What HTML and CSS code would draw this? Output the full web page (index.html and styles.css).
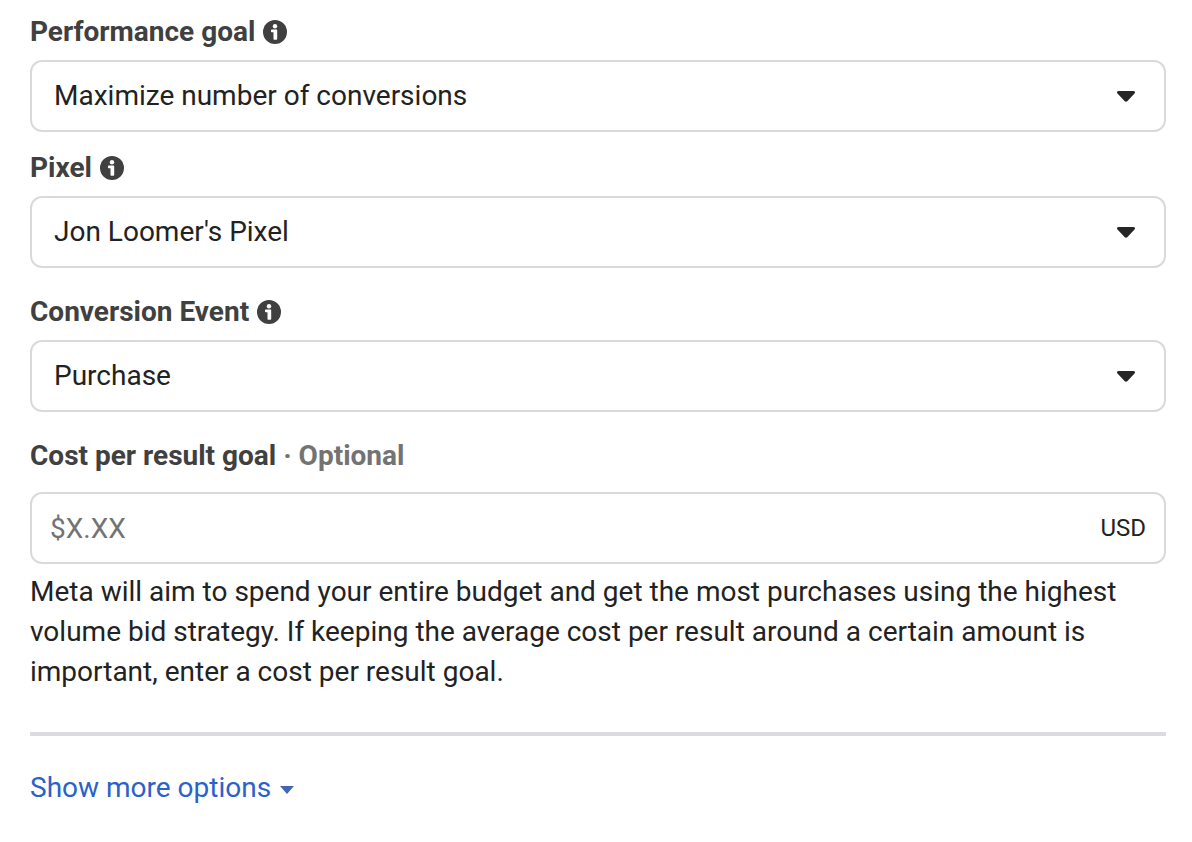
FILE: index.html
```html
<!DOCTYPE html>
<html lang="en">
<head>
<meta charset="utf-8">
<title>Performance goal</title>
<link rel="stylesheet" href="styles.css">
</head>
<body>
<svg class="sprite" aria-hidden="true">
<symbol id="info" viewBox="0 0 24 24"><circle cx="12" cy="12" r="12"/><circle class="cut" cx="12" cy="6.2" r="2.2"/><path class="cut" d="M9 9.500h4.200c.6 0 1 .4 1 1v8.200c0 .6-.4 1-1 1h-1.700c-.6 0-1-.4-1-1v-6.500H9c-.6 0-1-.4-1-1v-.7c0-.6.4-1 1-1z"/></symbol>
<symbol id="caret" viewBox="0 0 20 12"><path d="M2.500 1h15c1.500 0 2 1.600 1 2.600l-7 7.500c-.9.900-2.100.9-3 0l-7-7.500C.5 2.600 1 1 2.500 1z"/></symbol>
<symbol id="more-caret" viewBox="0 0 14 8"><path d="M0 0h14L7 8z"/></symbol>
</svg>
<form class="form">
<div class="field">
<div class="heading"><label for="goal">Performance goal</label><svg class="info"><use href="#info"/></svg></div>
<div class="box">
<select id="goal" class="control"><option>Maximize number of conversions</option></select>
<svg class="caret"><use href="#caret"/></svg>
</div>
</div>
<div class="field">
<div class="heading"><label for="pixel">Pixel</label><svg class="info"><use href="#info"/></svg></div>
<div class="box">
<select id="pixel" class="control"><option>Jon Loomer's Pixel</option></select>
<svg class="caret"><use href="#caret"/></svg>
</div>
</div>
<div class="field spaced">
<div class="heading"><label for="event">Conversion Event</label><svg class="info"><use href="#info"/></svg></div>
<div class="box">
<select id="event" class="control"><option>Purchase</option></select>
<svg class="caret"><use href="#caret"/></svg>
</div>
</div>
<div class="field spaced cost">
<div class="heading"><label for="cost">Cost per result goal <span class="optional">· Optional</span></label></div>
<div class="box">
<input id="cost" class="control amount" type="text" placeholder="$X.XX">
<span class="unit">USD</span>
</div>
</div>
<p class="help">Meta will aim to spend your entire budget and get the most purchases using the highest volume bid strategy. If keeping the average cost per result around a certain amount is important, enter a cost per result goal.</p>
<hr class="rule">
<button class="more" type="button">Show more options<svg class="more-caret"><use href="#more-caret"/></svg></button>
</form>
</body>
</html>
```
FILE: styles.css
```css
*{box-sizing:border-box}
body{margin:0;background:#fff;color:#222;font-family:Roboto,sans-serif;font-size:28px;line-height:40px}
.sprite{position:absolute;width:0;height:0}
.form{padding:12px 26px 32px 30px}
.field{margin-bottom:16px}
.spaced{margin-top:24px}
.heading{display:flex;align-items:center;gap:8px;margin-bottom:8px;color:#404040;font-weight:bold}
.cost .heading{margin-bottom:16px}
.optional{color:#737373}
.info{width:24px;height:24px;fill:#404040}
.cut{fill:#fff}
.box{display:grid;align-items:center;height:72px;border:2px solid #dadada;border-radius:12px;background:#fff}
.box > *{grid-area:1/1}
.control{width:100%;height:68px;padding:0 64px 0 22px;border:0;border-radius:10px;background:transparent;color:inherit;font:inherit;appearance:none}
.amount{padding:0 80px 0 18px}
.amount::placeholder{color:#737373;opacity:1}
.caret{justify-self:end;width:20px;height:12px;margin-right:28px;fill:#262626;pointer-events:none}
.unit{justify-self:end;margin-right:18px;font-size:24px}
.cost{margin-bottom:8px}
.help{margin:0}
.rule{height:4px;margin:40px 0 32px;border:0;background:#dbdce0}
.more{display:flex;align-items:center;gap:8px;padding:0;border:0;background:none;color:#2b61c9;font:inherit;cursor:pointer}
.more-caret{width:16px;height:8px;margin-top:4px;fill:#4267b2}
```
